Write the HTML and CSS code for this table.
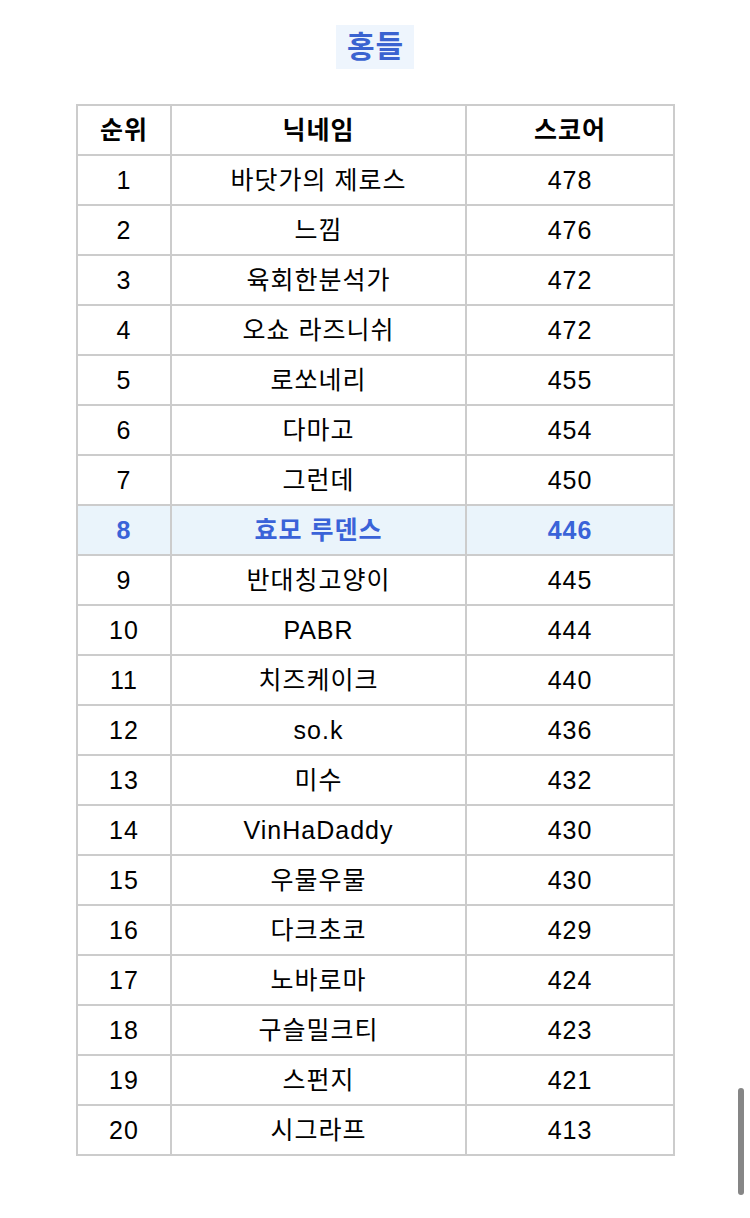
FILE: index.html
```html
<!DOCTYPE html>
<html lang="ko">
<head>
<meta charset="utf-8">
<title>홍들</title>
<link rel="stylesheet" href="styles.css">
</head>
<body>
<div class="page">
  <div class="title-wrap"><h1 class="title">홍들</h1></div>
  <table class="rank">
    <thead>
      <tr><th class="c1">순위</th><th class="c2">닉네임</th><th class="c3">스코어</th></tr>
    </thead>
    <tbody>
      <tr><td>1</td><td>바닷가의 제로스</td><td>478</td></tr>
      <tr><td>2</td><td>느낌</td><td>476</td></tr>
      <tr><td>3</td><td>육회한분석가</td><td>472</td></tr>
      <tr><td>4</td><td>오쇼 라즈니쉬</td><td>472</td></tr>
      <tr><td>5</td><td>로쏘네리</td><td>455</td></tr>
      <tr><td>6</td><td>다마고</td><td>454</td></tr>
      <tr><td>7</td><td>그런데</td><td>450</td></tr>
      <tr class="me"><td>8</td><td>효모 루덴스</td><td>446</td></tr>
      <tr><td>9</td><td>반대칭고양이</td><td>445</td></tr>
      <tr><td>10</td><td>PABR</td><td>444</td></tr>
      <tr><td>11</td><td>치즈케이크</td><td>440</td></tr>
      <tr><td>12</td><td>so.k</td><td>436</td></tr>
      <tr><td>13</td><td>미수</td><td>432</td></tr>
      <tr><td>14</td><td>VinHaDaddy</td><td>430</td></tr>
      <tr><td>15</td><td>우물우물</td><td>430</td></tr>
      <tr><td>16</td><td>다크초코</td><td>429</td></tr>
      <tr><td>17</td><td>노바로마</td><td>424</td></tr>
      <tr><td>18</td><td>구슬밀크티</td><td>423</td></tr>
      <tr><td>19</td><td>스펀지</td><td>421</td></tr>
      <tr><td>20</td><td>시그라프</td><td>413</td></tr>
    </tbody>
  </table>
</div>
<div class="scroll-thumb"></div>
</body>
</html>
```

FILE: styles.css
```css
html, body {
  margin: 0;
  padding: 0;
  background: #ffffff;
}
body {
  font-family: "Liberation Sans", "Noto Sans CJK KR", sans-serif;
  color: #000000;
}
.page {
  display: flex;
  flex-direction: column;
  align-items: center;
  padding-top: 25px;
}
.title-wrap {
  display: flex;
  justify-content: center;
}
.title {
  margin: 0;
  padding: 4px 10px 4px 11px;
  background: #eef5fd;
  color: #3a63d0;
  font-size: 30px;
  line-height: 36px;
  font-weight: 700;
  letter-spacing: 1px;
}
.rank {
  margin-top: 35px;
  border-collapse: separate;
  border-spacing: 0;
  border-top: 2px solid #cccccc;
  border-left: 2px solid #cccccc;
  font-size: 25px;
  letter-spacing: 1px;
}
.rank th, .rank td {
  height: 48px;
  padding: 0 0 0 1px;
  text-align: center;
  vertical-align: middle;
  border-right: 2px solid #cccccc;
  border-bottom: 2px solid #cccccc;
  line-height: 28px;
}
.rank th {
  font-weight: 700;
  color: #000;
}
.rank .c1 { width: 91px; }
.rank .c2 { width: 292px; }
.rank .c3 { width: 205px; }
.rank tr.me td {
  background: #eaf4fb;
  color: #3a63d8;
  font-weight: 700;
}
.scroll-thumb {
  position: fixed;
  left: 738px;
  top: 1088px;
  width: 6px;
  height: 107px;
  border-radius: 3px;
  background: #868686;
}
```
